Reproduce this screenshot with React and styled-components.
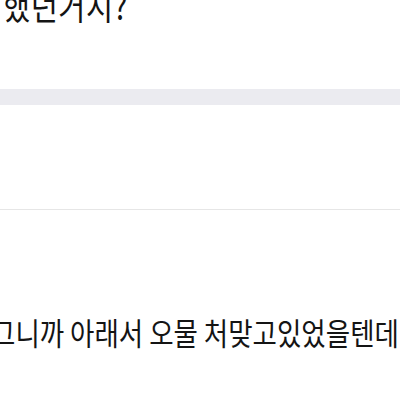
import React from "react";
import styled, { createGlobalStyle } from "styled-components";

const Global = createGlobalStyle`
  html, body { margin: 0; padding: 0; background: #ffffff; }
  body { overflow: hidden; }
`;

const Page = styled.div`
  width: 400px;
  height: 400px;
  display: flex;
  flex-direction: column;
  overflow: hidden;
  background: #ffffff;
  font-family: "Noto Sans CJK KR", "Noto Sans", sans-serif;
  color: #141414;
`;

const TitleArea = styled.div`
  height: 89px;
  flex-shrink: 0;
  padding-left: 3px;
  box-sizing: border-box;
`;

const Title = styled.div`
  width: max-content;
  font-size: 29.5px;
  line-height: 1;
  white-space: nowrap;
  letter-spacing: 0.5px;
  margin-top: -9px;
  transform: scaleY(1.2);
`;

const Band = styled.div`
  height: 16px;
  flex-shrink: 0;
  background: #ebebf0;
`;

const Section = styled.div`
  height: 104px;
  flex-shrink: 0;
  background: #ffffff;
`;

const Divider = styled.div`
  height: 1px;
  flex-shrink: 0;
  background: #e6e6e6;
`;

const CommentArea = styled.div`
  flex: 1;
  padding-top: 109px;
  margin-left: -9px;
`;

const Comment = styled.div`
  width: max-content;
  white-space: nowrap;
  font-size: 26.5px;
  line-height: 1;
  transform: scaleY(1.15);
`;

export default function App() {
  return (
    <>
      <Global />
      <Page>
        <TitleArea>
          <Title>했던거시?</Title>
        </TitleArea>
        <Band />
        <Section />
        <Divider />
        <CommentArea>
          <Comment>그니까 아래서 오물 처맞고있었을텐데</Comment>
        </CommentArea>
      </Page>
    </>
  );
}
